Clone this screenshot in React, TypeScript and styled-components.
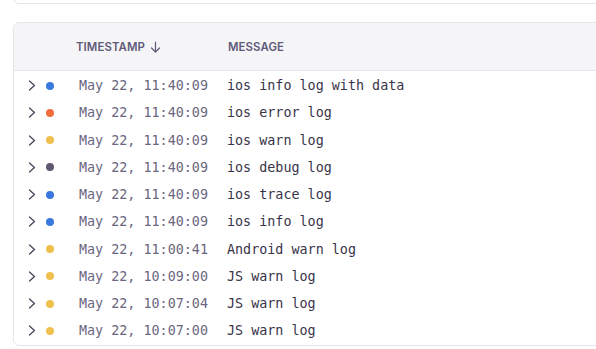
import React from "react";
import styled, { createGlobalStyle } from "styled-components";

const Global = createGlobalStyle`
  html, body { margin: 0; padding: 0; background: #ffffff; overflow: hidden; }
  body { width: 596px; height: 349px; }
`;

const Page = styled.div`
  display: flex;
  flex-direction: column;
  gap: 18px;
  padding-left: 13px;
  width: 640px;
`;

const TopCard = styled.div`
  height: 12px;
  margin-top: -10px;
  border: 1px solid #e6e5ec;
  border-radius: 6px;
  background: #fff;
`;

const Card = styled.div`
  border: 1px solid #e6e5ec;
  border-radius: 6px;
  background: #fff;
  overflow: hidden;
`;

const Header = styled.div`
  display: grid;
  grid-template-columns: 62px 152px 1fr;
  align-items: center;
  height: 47px;
  background: #f5f5f8;
  border-bottom: 1px solid #e6e5ec;
  font-family: Inter, "Noto Sans", sans-serif;
  font-size: 11.4px;
  font-weight: 600;
  letter-spacing: 0.1px;
  color: #605a78;
  text-transform: uppercase;
`;

const HeadCell = styled.div`
  display: flex;
  align-items: center;
  gap: 5px;
`;

const Body = styled.div`
  padding-top: 1px;
`;

const Row = styled.div`
  display: grid;
  grid-template-columns: 14px 10px 8px 10px 23px 148px 1fr;
  align-items: center;
  height: 27.25px;
  font-family: "DejaVu Sans Mono", "Liberation Mono", monospace;
  font-size: 13.4px;
`;

const Chevron = styled.svg`
  grid-column: 2;
  width: 8px;
  height: 11px;
  display: block;
`;

const Dot = styled.span<{ $c: string }>`
  grid-column: 4;
  width: 8px;
  height: 8px;
  border-radius: 50%;
  background: ${(p) => p.$c};
`;

const Time = styled.span`
  grid-column: 6;
  color: #6c6680;
  white-space: nowrap;
`;

const Msg = styled.span`
  grid-column: 7;
  color: #39344a;
  white-space: nowrap;
`;

const colors: Record<string, string> = {
  info: "#3a78e0",
  error: "#f26d3d",
  warn: "#eec04d",
  debug: "#5f5870",
};

const rows: [string, string, string][] = [
  ["May 22, 11:40:09", "ios info log with data", "info"],
  ["May 22, 11:40:09", "ios error log", "error"],
  ["May 22, 11:40:09", "ios warn log", "warn"],
  ["May 22, 11:40:09", "ios debug log", "debug"],
  ["May 22, 11:40:09", "ios trace log", "info"],
  ["May 22, 11:40:09", "ios info log", "info"],
  ["May 22, 11:00:41", "Android warn log", "warn"],
  ["May 22, 10:09:00", "JS warn log", "warn"],
  ["May 22, 10:07:04", "JS warn log", "warn"],
  ["May 22, 10:07:00", "JS warn log", "warn"],
];

export default function App() {
  return (
    <>
      <Global />
      <Page>
        <TopCard />
        <Card>
          <Header>
            <span />
            <HeadCell>
              TIMESTAMP
              <svg width="11" height="12" viewBox="0 0 11 12" fill="none">
                <path d="M5.5 1v10M1.5 7l4 4 4-4" stroke="#605a78" strokeWidth="1.2" strokeLinecap="round" strokeLinejoin="round" />
              </svg>
            </HeadCell>
            <HeadCell>MESSAGE</HeadCell>
          </Header>
          <Body>
            {rows.map(([t, m, l], i) => (
              <Row key={i}>
                <Chevron viewBox="0 0 8 11" fill="none">
                  <path d="M1.5 1l5 4.5-5 4.5" stroke="#4a4558" strokeWidth="1.3" strokeLinecap="round" strokeLinejoin="round" />
                </Chevron>
                <Dot $c={colors[l]} />
                <Time>{t}</Time>
                <Msg>{m}</Msg>
              </Row>
            ))}
          </Body>
        </Card>
      </Page>
    </>
  );
}
